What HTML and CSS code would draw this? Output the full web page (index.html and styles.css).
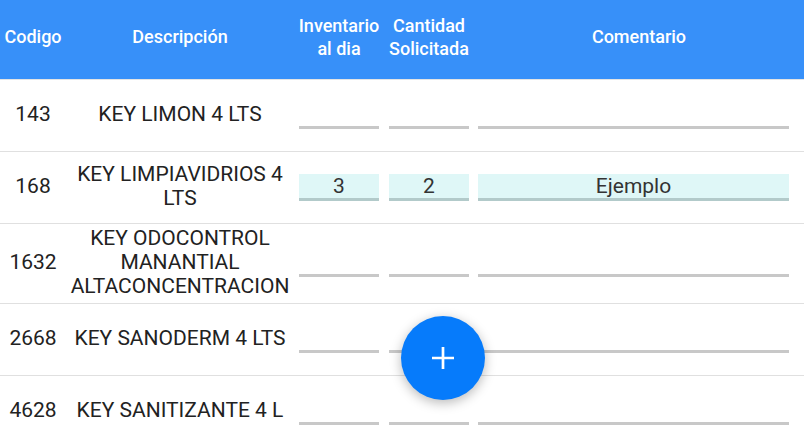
FILE: index.html
```html
<!DOCTYPE html>
<html lang="es">
<head>
<meta charset="utf-8">
<title>Pedido</title>
<link rel="stylesheet" href="styles.css">
</head>
<body>
<div class="table">
  <div class="row head">
    <div class="cell">Codigo</div>
    <div class="cell">Descripción</div>
    <div class="cell">Inventario<br>al dia</div>
    <div class="cell">Cantidad<br>Solicitada</div>
    <div class="cell">Comentario</div>
  </div>
  <div class="row">
    <div class="cell">143</div>
    <div class="cell">KEY LIMON 4 LTS</div>
    <div class="cell in"><div class="field"></div></div>
    <div class="cell in"><div class="field"></div></div>
    <div class="cell in comment"><div class="field"></div></div>
  </div>
  <div class="row">
    <div class="cell">168</div>
    <div class="cell">KEY LIMPIAVIDRIOS 4 LTS</div>
    <div class="cell in"><div class="field filled">3</div></div>
    <div class="cell in"><div class="field filled">2</div></div>
    <div class="cell in comment"><div class="field filled">Ejemplo</div></div>
  </div>
  <div class="row">
    <div class="cell">1632</div>
    <div class="cell">KEY ODOCONTROL MANANTIAL ALTACONCENTRACION</div>
    <div class="cell in"><div class="field"></div></div>
    <div class="cell in"><div class="field"></div></div>
    <div class="cell in comment"><div class="field"></div></div>
  </div>
  <div class="row">
    <div class="cell">2668</div>
    <div class="cell">KEY SANODERM 4 LTS</div>
    <div class="cell in"><div class="field"></div></div>
    <div class="cell in"><div class="field"></div></div>
    <div class="cell in comment"><div class="field"></div></div>
  </div>
  <div class="row">
    <div class="cell">4628</div>
    <div class="cell">KEY SANITIZANTE 4 L</div>
    <div class="cell in"><div class="field"></div></div>
    <div class="cell in"><div class="field"></div></div>
    <div class="cell in comment"><div class="field"></div></div>
  </div>
</div>
<button class="fab" type="button" aria-label="Agregar">
  <svg width="24" height="24" viewBox="0 0 24 24"><path d="M12 1v22M1 12h22" stroke="#fff" stroke-width="2.7" fill="none"/></svg>
</button>
</body>
</html>
```
FILE: styles.css
```css
html, body {
  margin: 0;
  padding: 0;
  background: #fff;
  font-family: Roboto, "Noto Sans", sans-serif;
  color: #222;
  overflow: hidden;
}
.table {
  display: flex;
  flex-direction: column;
}
.row {
  display: grid;
  grid-template-columns: 66px 228px 90px 90px 1fr;
  min-height: 71px;
  border-bottom: 1px solid #e0e0e0;
  font-size: 21px;
  line-height: 24px;
}
.cell {
  display: flex;
  align-items: center;
  justify-content: center;
  text-align: center;
  padding: 2px 4px 5px;
}
.cell.in {
  padding: 3px 5px 4px;
}
.head {
  background: #3790f9;
  color: #fff;
  font-weight: 500;
  font-size: 18px;
  line-height: 23px;
  min-height: 79px;
  border-bottom: 1px solid #e4e4e4;
}
.head .cell {
  padding: 0 0 6px;
}
.cell.comment {
  padding-left: 4px;
  padding-right: 15px;
}
.field {
  width: 100%;
  height: 24px;
  border-bottom: 3px solid #c8c8c8;
  font-size: 21px;
  line-height: 24px;
  color: #333;
  text-align: center;
}
.field.filled {
  background: #dff7f7;
  border-bottom-color: #b2caca;
}
.fab {
  position: fixed;
  left: 401px;
  top: 316px;
  width: 84px;
  height: 84px;
  border-radius: 50%;
  border: none;
  padding: 0;
  background: #067bfb;
  box-shadow: 0 3px 12px rgba(0, 0, 0, 0.28);
  display: flex;
  align-items: center;
  justify-content: center;
}
```
